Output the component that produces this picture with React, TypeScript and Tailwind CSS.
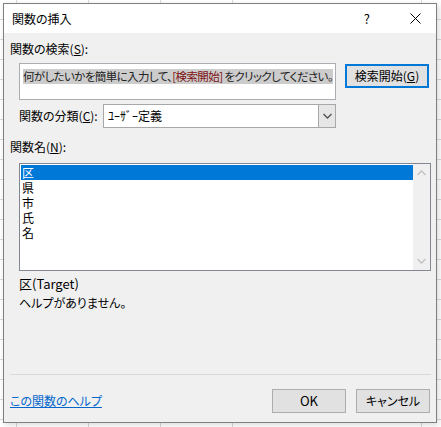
import React from 'react';

const font = "font-['Noto_Sans_CJK_JP','Noto_Sans',sans-serif] [font-feature-settings:'palt']";

function Chevron({ up = false, className = '' }: { up?: boolean; className?: string }) {
  return (
    <svg width="9" height="6" viewBox="0 0 9 6" className={className}>
      <path
        d={up ? 'M0.5 5 L4.5 1 L8.5 5' : 'M0.5 1 L4.5 5 L8.5 1'}
        fill="none"
        stroke="currentColor"
        strokeWidth="1.3"
      />
    </svg>
  );
}

function Button({ children, focused = false, className = '' }: { children: React.ReactNode; focused?: boolean; className?: string }) {
  return (
    <div
      className={`flex items-center justify-center bg-[#e1e1e1] text-[12px] text-black ${
        focused ? 'border-2 border-[#0078d7]' : 'border border-[#adadad]'
      } ${className}`}
    >
      {children}
    </div>
  );
}

export default function App() {
  const items = ['区', '県', '市', '氏', '名'];

  return (
    <div
      className={`w-[441px] h-[427px] overflow-hidden bg-white pt-[3px] pl-[3px] ${font} bg-[linear-gradient(to_right,transparent_16px,#d9d9d9_16px,#d9d9d9_17px,transparent_17px,transparent_88px,#d9d9d9_88px,#d9d9d9_89px,transparent_89px,transparent_160px,#d9d9d9_160px,#d9d9d9_161px,transparent_161px,transparent_232px,#d9d9d9_232px,#d9d9d9_233px,transparent_233px,transparent_421px,#d9d9d9_421px,#d9d9d9_422px,transparent_422px),repeating-linear-gradient(to_bottom,transparent_0px,transparent_19px,#d9d9d9_19px,#d9d9d9_20px)]`}
    >
      <div className="w-[434px] h-[420px] border border-[#7f7f7f] bg-[#f0f0f0] flex flex-col shadow-[2px_2px_6px_rgba(0,0,0,0.15)]">
        {/* title bar */}
        <div className="h-[29px] bg-white flex items-center pl-[8px] shrink-0">
          <span className="text-[12px] text-black">関数の挿入</span>
          <span className="ml-auto mr-[40px] text-[13px] text-black">?</span>
          <svg width="11" height="11" viewBox="0 0 11 11" className="mr-[15px] text-black">
            <path d="M0.5 0.5 L10.5 10.5 M10.5 0.5 L0.5 10.5" stroke="currentColor" strokeWidth="1" />
          </svg>
        </div>

        <div className="flex flex-col pl-[6px] text-[12px] text-black">
          <div className="mt-[8px] h-[16px] leading-[16px]">
            関数の検索(<span className="underline">S</span>):
          </div>

          <div className="flex mt-[6px] ml-[9px]">
            <div className="w-[317px] h-[37px] shrink-0 overflow-hidden bg-white border border-[#abadb3] pt-[3px] pl-[3px]">
              <span className="bg-[#cccccc] text-[11.5px] tracking-[-0.6px] leading-[15px] inline-block whitespace-nowrap text-[#222]">
                何がしたいかを簡単に入力して、<span className="text-[#7d1212]">[検索開始]</span> をクリックしてください。
              </span>
            </div>
            <Button focused className="ml-[9px] mt-[1px] w-[84px] h-[24px] shrink-0">
              検索開始(<span className="underline">G</span>)
            </Button>
          </div>

          <div className="flex items-center mt-[4px] ml-[9px]">
            <span className="w-[84px]">
              関数の分類(<span className="underline">C</span>):
            </span>
            <div className="w-[233px] h-[24px] bg-white border border-[#a8a8a8] flex">
              <span className="flex-1 pl-[4px] leading-[22px]">ﾕｰｻﾞｰ定義</span>
              <div className="w-[17px] bg-[#e6e6e6] border-l border-[#a8a8a8] flex items-center justify-center text-[#505050]">
                <Chevron />
              </div>
            </div>
          </div>

          <div className="mt-[11px] h-[16px] leading-[16px]">
            関数名(<span className="underline">N</span>):
          </div>

          <div className="mt-[8px] ml-[9px] w-[412px] h-[108px] bg-white border border-[#828790] flex">
            <div className="flex-1 pt-[1px] pl-[1px]">
              {items.map((it, i) => (
                <div
                  key={it}
                  className={`h-[15px] leading-[15px] pl-[1px] overflow-hidden ${i === 0 ? 'bg-[#0078d7] text-white' : 'text-black'}`}
                >
                  {it}
                </div>
              ))}
            </div>
            <div className="w-[17px] bg-[#f0f0f0] flex flex-col items-center justify-between py-[6px] text-[#c2c2c2]">
              <Chevron up />
              <Chevron />
            </div>
          </div>

          <div className="mt-[4px] ml-[9px] h-[17px] leading-[17px] text-[13px]">区(Target)</div>
          <div className="mt-[3px] ml-[9px] h-[16px] leading-[16px]">ヘルプがありません。</div>

          <div className="mt-[63px] w-[421px] h-px bg-[#d9d9d9]" />

          <div className="flex items-center mt-[14px] pr-[6px]">
            <span className="text-[#0066cc] underline">この関数のヘルプ</span>
            <Button className="ml-auto w-[74px] h-[24px] text-[13px]">OK</Button>
            <Button className="ml-[10px] w-[74px] h-[24px]">キャンセル</Button>
          </div>
        </div>
      </div>
    </div>
  );
}
